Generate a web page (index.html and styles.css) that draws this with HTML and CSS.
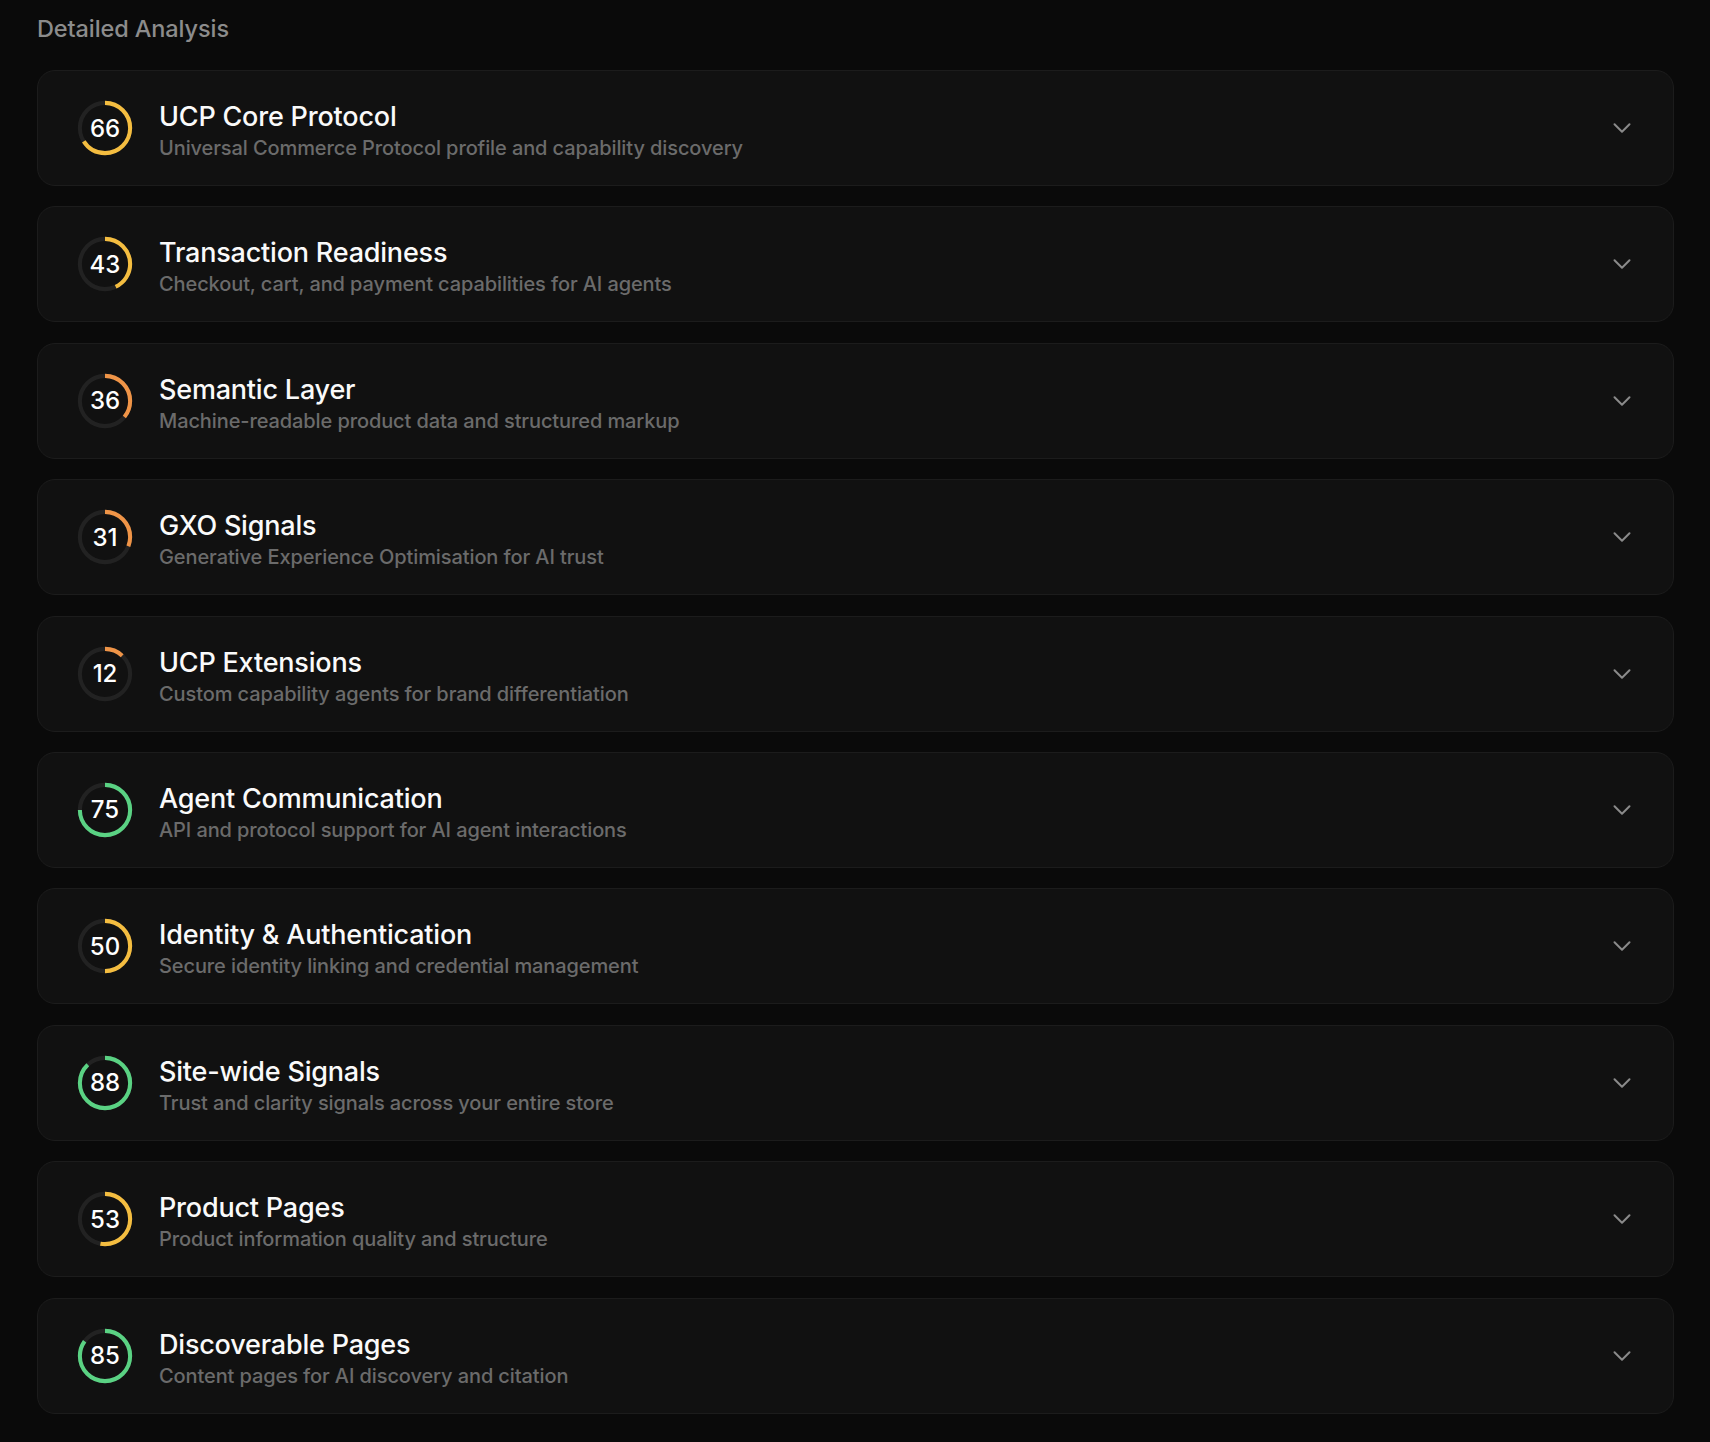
FILE: index.html
```html
<!DOCTYPE html>
<html lang="en">
<head>
    <meta charset="UTF-8">
    <meta name="viewport" content="width=device-width, initial-scale=1.0">
    <title>Detailed Analysis</title>
    <link rel="stylesheet" href="styles.css">
</head>
<body>
    <div class="analysis">
        <h2 class="analysis-title">Detailed Analysis</h2>
        <div class="analysis-list">

            <div class="score-card">
                <div class="score-ring ring-yellow">
                    <svg viewBox="0 0 60 60"><circle class="track" cx="30" cy="30" r="26"/><circle class="bar" cx="30" cy="30" r="26" pathLength="100" style="stroke-dasharray: 66 100"/></svg>
                    <span>66</span>
                </div>
                <div class="score-text">
                    <div class="score-name">UCP Core Protocol</div>
                    <div class="score-desc">Universal Commerce Protocol profile and capability discovery</div>
                </div>
                <svg class="chevron" viewBox="0 0 24 24"><path d="m6 9 6 6 6-6"/></svg>
            </div>

            <div class="score-card">
                <div class="score-ring ring-yellow">
                    <svg viewBox="0 0 60 60"><circle class="track" cx="30" cy="30" r="26"/><circle class="bar" cx="30" cy="30" r="26" pathLength="100" style="stroke-dasharray: 43 100"/></svg>
                    <span>43</span>
                </div>
                <div class="score-text">
                    <div class="score-name">Transaction Readiness</div>
                    <div class="score-desc">Checkout, cart, and payment capabilities for AI agents</div>
                </div>
                <svg class="chevron" viewBox="0 0 24 24"><path d="m6 9 6 6 6-6"/></svg>
            </div>

            <div class="score-card">
                <div class="score-ring ring-orange">
                    <svg viewBox="0 0 60 60"><circle class="track" cx="30" cy="30" r="26"/><circle class="bar" cx="30" cy="30" r="26" pathLength="100" style="stroke-dasharray: 36 100"/></svg>
                    <span>36</span>
                </div>
                <div class="score-text">
                    <div class="score-name">Semantic Layer</div>
                    <div class="score-desc">Machine-readable product data and structured markup</div>
                </div>
                <svg class="chevron" viewBox="0 0 24 24"><path d="m6 9 6 6 6-6"/></svg>
            </div>

            <div class="score-card">
                <div class="score-ring ring-orange">
                    <svg viewBox="0 0 60 60"><circle class="track" cx="30" cy="30" r="26"/><circle class="bar" cx="30" cy="30" r="26" pathLength="100" style="stroke-dasharray: 31 100"/></svg>
                    <span>31</span>
                </div>
                <div class="score-text">
                    <div class="score-name">GXO Signals</div>
                    <div class="score-desc">Generative Experience Optimisation for AI trust</div>
                </div>
                <svg class="chevron" viewBox="0 0 24 24"><path d="m6 9 6 6 6-6"/></svg>
            </div>

            <div class="score-card">
                <div class="score-ring ring-orange">
                    <svg viewBox="0 0 60 60"><circle class="track" cx="30" cy="30" r="26"/><circle class="bar" cx="30" cy="30" r="26" pathLength="100" style="stroke-dasharray: 12 100"/></svg>
                    <span>12</span>
                </div>
                <div class="score-text">
                    <div class="score-name">UCP Extensions</div>
                    <div class="score-desc">Custom capability agents for brand differentiation</div>
                </div>
                <svg class="chevron" viewBox="0 0 24 24"><path d="m6 9 6 6 6-6"/></svg>
            </div>

            <div class="score-card">
                <div class="score-ring ring-green">
                    <svg viewBox="0 0 60 60"><circle class="track" cx="30" cy="30" r="26"/><circle class="bar" cx="30" cy="30" r="26" pathLength="100" style="stroke-dasharray: 75 100"/></svg>
                    <span>75</span>
                </div>
                <div class="score-text">
                    <div class="score-name">Agent Communication</div>
                    <div class="score-desc">API and protocol support for AI agent interactions</div>
                </div>
                <svg class="chevron" viewBox="0 0 24 24"><path d="m6 9 6 6 6-6"/></svg>
            </div>

            <div class="score-card">
                <div class="score-ring ring-yellow">
                    <svg viewBox="0 0 60 60"><circle class="track" cx="30" cy="30" r="26"/><circle class="bar" cx="30" cy="30" r="26" pathLength="100" style="stroke-dasharray: 50 100"/></svg>
                    <span>50</span>
                </div>
                <div class="score-text">
                    <div class="score-name">Identity &amp; Authentication</div>
                    <div class="score-desc">Secure identity linking and credential management</div>
                </div>
                <svg class="chevron" viewBox="0 0 24 24"><path d="m6 9 6 6 6-6"/></svg>
            </div>

            <div class="score-card">
                <div class="score-ring ring-green">
                    <svg viewBox="0 0 60 60"><circle class="track" cx="30" cy="30" r="26"/><circle class="bar" cx="30" cy="30" r="26" pathLength="100" style="stroke-dasharray: 88 100"/></svg>
                    <span>88</span>
                </div>
                <div class="score-text">
                    <div class="score-name">Site-wide Signals</div>
                    <div class="score-desc">Trust and clarity signals across your entire store</div>
                </div>
                <svg class="chevron" viewBox="0 0 24 24"><path d="m6 9 6 6 6-6"/></svg>
            </div>

            <div class="score-card">
                <div class="score-ring ring-yellow">
                    <svg viewBox="0 0 60 60"><circle class="track" cx="30" cy="30" r="26"/><circle class="bar" cx="30" cy="30" r="26" pathLength="100" style="stroke-dasharray: 53 100"/></svg>
                    <span>53</span>
                </div>
                <div class="score-text">
                    <div class="score-name">Product Pages</div>
                    <div class="score-desc">Product information quality and structure</div>
                </div>
                <svg class="chevron" viewBox="0 0 24 24"><path d="m6 9 6 6 6-6"/></svg>
            </div>

            <div class="score-card">
                <div class="score-ring ring-green">
                    <svg viewBox="0 0 60 60"><circle class="track" cx="30" cy="30" r="26"/><circle class="bar" cx="30" cy="30" r="26" pathLength="100" style="stroke-dasharray: 85 100"/></svg>
                    <span>85</span>
                </div>
                <div class="score-text">
                    <div class="score-name">Discoverable Pages</div>
                    <div class="score-desc">Content pages for AI discovery and citation</div>
                </div>
                <svg class="chevron" viewBox="0 0 24 24"><path d="m6 9 6 6 6-6"/></svg>
            </div>

        </div>
    </div>
</body>
</html>
```

FILE: styles.css
```css
* {
    box-sizing: border-box;
}
html,body {
    margin: 0;
    padding: 0;
    min-height: 100%;
}
body {
    background: #0a0a0a;
    font-family: Inter, "Noto Sans", "Liberation Sans", sans-serif;
    color: #fff;
}
.analysis {
    padding: 15px 36px 40px 37px;
}
.analysis-title {
    margin: 0 0 27px;
    font-size: 23.5px;
    line-height: 28px;
    font-weight: 500;
    color: #8c8c8c;
    letter-spacing: -0.1px;
}
.analysis-list {
    display: flex;
    flex-direction: column;
    gap: 20.4px;
}
.score-card {
    display: flex;
    align-items: center;
    height: 116px;
    padding: 0 36px 0 38px;
    background: #111111;
    border: 1px solid #1c1c1c;
    border-radius: 18px;
}
.score-ring {
    position: relative;
    flex: 0 0 58px;
    width: 58px;
    height: 58px;
}
.score-ring svg {
    display: block;
    width: 58px;
    height: 58px;
    transform: rotate(-90deg);
}
.score-ring circle {
    fill: none;
    stroke-width: 4.2;
}
.score-ring .track {
    stroke: #222222;
}
.score-ring .bar {
    stroke-linecap: butt;
}
.ring-yellow .bar { stroke: #f4bd40; }
.ring-orange .bar { stroke: #ef9447; }
.ring-green .bar { stroke: #5ad283; }
.score-ring span {
    position: absolute;
    inset: 0;
    display: flex;
    align-items: center;
    justify-content: center;
    font-size: 24px;
    font-weight: 500;
    color: #fff;
}
.score-text {
    flex: 1;
    margin-left: 25px;
    padding-top: 6px;
}
.score-name {
    font-size: 27px;
    line-height: 32px;
    font-weight: 500;
    color: #fafafa;
    letter-spacing: -0.2px;
}
.score-desc {
    margin-top: 2px;
    font-size: 20px;
    line-height: 26px;
    font-weight: 500;
    color: #6b6b6b;
    letter-spacing: -0.1px;
}
.chevron {
    width: 30px;
    height: 30px;
    fill: none;
    stroke: #8a8a8a;
    stroke-width: 1.6;
    stroke-linecap: round;
    stroke-linejoin: round;
}
```
